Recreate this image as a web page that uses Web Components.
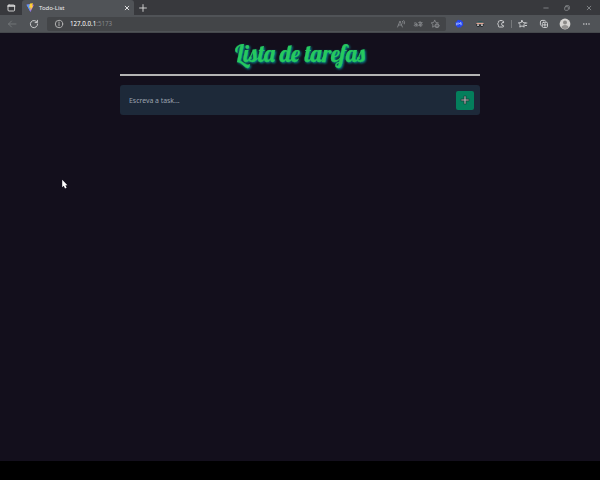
<!DOCTYPE html>
<html lang="pt-BR"><head><meta charset="utf-8"><title>Todo-List</title>
<style>html,body{margin:0;width:600px;height:480px;overflow:hidden;background:#000;font-family:"Noto Sans","Open Sans",sans-serif}</style>
</head><body><browser-window></browser-window>
<script>
const define=(name,html)=>customElements.define(name,class extends HTMLElement{
  constructor(){super();this.attachShadow({mode:'open'}).innerHTML=html;}
});
const glyphs={
 panel:'<rect x="5" y="5" width="6.6" height="6" rx="1"/><path d="M5 6h6.6" stroke-width="1.5"/>',
 vite:'<path d="M4.5 4.8 8 4.2l4 .6L8.5 12z" fill="#a65cf0" stroke="none"/><path d="M4.5 4.8 8 4.2l.5 7.8z" fill="#5a9cf0" stroke="none"/><path d="M8 3.6 11 3.2 10.2 5.8h1.1L8.4 10.8 8.5 7.6 7 7.8z" fill="#ffce35" stroke="none"/>',
 close:'<path d="m6.2 6.2 3.6 3.6m0-3.6L6.2 9.8"/>',
 plus:'<path d="M8 4.6v6.8M4.6 8h6.8"/>',
 min:'<path d="M5.8 8h4.4"/>',
 restore:'<rect x="5.7" y="6.7" width="3.6" height="3.6" rx=".7"/><path d="M7 5.7h2.5q.8 0 .8.8V9"/>',
 back:'<path d="M12 8H4.5m3-3-3 3 3 3"/>',
 reload:'<path d="M11 6.1A3.6 3.6 0 1 0 11.6 8M11.4 4.3v2.3H9.1"/>',
 info:'<circle cx="8" cy="8" r="3.7"/><path d="M8 7.6v2.2M8 6v.7"/>',
 read:'<path d="m4.6 11 2.4-6 2.4 6M5.4 9h3.2M9.4 5.2q1 .8.5 2M10.8 4.5q1.5 1.5.6 3.4"/>',
 trans:'<path d="M4.4 7q2.6-.8 2.6 1v2.3M7 8.4q-3-.3-2.9 1 .3 1.5 2.9.1M8.6 6.6h3.6M10 5.5q-.3 3 .5 4.8M11.5 7.5q-1.1 2.5-2.5 2.4-1-.5.2-1.4 3-1.2 3 .2 0 1-1.2 1.6"/>',
 staradd:'<path d="m7.7 4.3 1.1 2.2 2.5.4M7.7 4.3 6.6 6.5l-2.4.4L6 8.6l-.4 2.6 1.9-1"/><circle cx="10" cy="9.7" r="2" fill="#888a8e"/><path d="M9 9.7h2M10 8.7v2" stroke="#434548" stroke-width=".6"/>',
 badge:'<path d="m7 3.8 1.5.4 1.6-.3.7 1.4 1.4.8-.3 1.6.4 1.5-1.5.9-.8 1.4-1.6-.2-1.7.4-.8-1.3-1.5-.8.3-1.6-.4-1.6 1.4-.9z" fill="#2546f2" stroke="none"/><path d="M5.8 7.2v1.7M7.1 6.8v1.5M8.4 7.5 10 6.6v2.2" stroke="#cfe0ff" stroke-width=".8"/>',
 face:'<path d="M4.6 7.4Q5 5 8 5t3.4 2.4z" fill="#2c5558" stroke="none"/><path d="M4.3 7.7h7.4v1.2q-.8 2.1-2.6 1.8L8 9.9l-1.1.8q-2 .3-2.6-1.8z" fill="#161c20" stroke="none"/><path d="M5 7.5h6" stroke="#e0a391" stroke-width="1.3"/><path d="M5.5 9.1h1.2M9.3 9.1h1.2" stroke="#eee" stroke-width="1.1"/>',
 puzzle:'<path d="M10.6 6.2V5.7q0-.8-.8-.8H9.1Q8 3.7 6.9 4.9H6.2q-.8 0-.8.8v.8Q4 7.8 5.4 9.2v1q0 .8.8.8h3.6q.8 0 .8-.8v-.5Q8.6 9.9 8.6 8q0-1.9 2-1.8z" stroke-width=".9"/>',
 fav:'<path d="m7 4.4 1.1 2.2 2.5.3-1.8 1.7.4 2.5L7 9.9l-2.2 1.2.4-2.5-1.8-1.7 2.5-.3zM10.6 7h1.3M10 9.5h1.6"/>',
 coll:'<rect x="6.3" y="6.3" width="5.2" height="5.2" rx="1.2"/><path d="M5.2 9.7Q4.4 9.4 4.4 8.4V6q0-1.6 1.6-1.6h2.4q1 0 1.3.8M8.9 7.5v2.8M7.5 8.9h2.8"/>',
 avatar:'<circle cx="8" cy="8" r="5.4" fill="#d5d3d1" stroke="none"/><circle cx="8" cy="6.5" r="2" fill="#8b8987" stroke="none"/><path d="M4.4 11.4q.4-2.5 3.6-2.5t3.6 2.5Q8 14.5 4.4 11.4z" fill="#939190" stroke="none"/>',
 dots:'<g fill="currentColor" stroke="none"><circle cx="5.8" cy="8" r=".75"/><circle cx="8.4" cy="8" r=".75"/><circle cx="11" cy="8" r=".75"/></g>'
};
customElements.define('ui-icon',class extends HTMLElement{
 constructor(){super();this.attachShadow({mode:'open'})}
 connectedCallback(){this.shadowRoot.innerHTML=`<style>:host{display:block;width:16px;height:16px;flex:none}svg{display:block}</style><svg width="16" height="16" viewBox="0 0 16 16" fill="none" stroke="currentColor" stroke-width=".9" stroke-linecap="round" stroke-linejoin="round">${glyphs[this.getAttribute('name')]}</svg>`}
});
define('browser-tab',`<style>:host{display:flex;align-items:center;box-sizing:border-box;width:112px;height:16px;background:#505357;border-radius:3px 3px 0 0;color:#eee;font-size:6px}span{flex:1;white-space:nowrap;line-height:14px;margin-left:1px}.x{margin-right:-1px}ui-icon{margin-top:-1px}</style><ui-icon name="vite"></ui-icon><span><slot></slot></span><ui-icon class="x" name="close"></ui-icon>`);
define('tab-strip',`<style>:host{display:flex;height:15px;background:#38393d;color:#ddd}.panel{margin:0 3px 0 3px}browser-tab{flex:none}.new{margin-left:.5px}.min{margin-left:387px;color:#85878a}.win{margin-left:5.5px;color:#85878a}ui-icon{margin-top:-.5px}</style>
<ui-icon class="panel" name="panel"></ui-icon><browser-tab>Todo-List</browser-tab><ui-icon class="new" name="plus"></ui-icon><ui-icon class="min" name="min"></ui-icon><ui-icon class="win" name="restore"></ui-icon><ui-icon class="win" name="close"></ui-icon>`);
define('address-bar',`<style>:host{display:flex;align-items:center;box-sizing:border-box;width:399px;height:14px;padding:0 3px 0 4px;background:#434548;border-radius:2px;color:#85878a;font-size:6.2px}.info{color:#bbb}.url{flex:1;margin-left:3px;line-height:14px}b{font-weight:400;color:#fff}.act{margin-left:1px}</style><ui-icon class="info" name="info"></ui-icon><span class="url"><b>127.0.0.1</b>:5173</span><ui-icon name="read"></ui-icon><ui-icon class="act" name="trans"></ui-icon><ui-icon class="act" name="staradd"></ui-icon>`);
define('tool-bar',`<style>:host{display:flex;align-items:center;box-sizing:border-box;height:18px;padding-left:4px;background:#505357;border-bottom:1px solid #45484c;color:#d6d7d9}address-bar{margin-left:5px;flex:none}.back{color:#75787b}.re{margin-left:6px}i{width:1px;height:8px;margin:0 2px 0 2px;background:#77797c}.g5{margin-left:5px}</style>
<ui-icon class="back" name="back"></ui-icon><ui-icon class="re" name="reload"></ui-icon><address-bar></address-bar><ui-icon class="g5" name="badge"></ui-icon><ui-icon class="g5" name="face"></ui-icon><ui-icon class="g5" name="puzzle"></ui-icon><i></i><ui-icon style="margin-left:1px" name="fav"></ui-icon><ui-icon class="g5" name="coll"></ui-icon><ui-icon class="g5" name="avatar"></ui-icon><ui-icon class="g5" name="dots"></ui-icon>`);
define('page-title',`<style>:host{display:block;height:41px;border-bottom:2px solid #b4b4b4;box-sizing:border-box}svg{display:block;margin:auto;overflow:visible;filter:drop-shadow(1px 1.2px 1px #079098)}text{font:400 24px Lobster,"Liberation Serif",serif;fill:#26c95f;stroke:#26c95f;stroke-width:.25px}</style>
<svg width="132" height="39" role="heading"><text x="1" y="27" textLength="130" lengthAdjust="spacingAndGlyphs">Lista de tarefas</text></svg>`);
define('add-button',`<style>:host{display:block;flex:none}button{display:grid;place-items:center;width:18px;height:19px;padding:0;border:0;border-radius:2px;background:#047f5c}svg{display:block}</style><button aria-label="Adicionar"><svg width="10" height="10" viewBox="0 0 10 10" fill="none"><path d="M5 .8v8.4M.8 5h8.4" stroke="#17352e" stroke-width="2.6"/><path d="M5 1.3v7.4M1.3 5h7.4" stroke="#b8b0b6" stroke-width="1.2"/></svg></button>`);
define('task-form',`<style>:host{display:flex;align-items:center;box-sizing:border-box;height:30px;margin-top:9px;padding:0 6px 0 9px;background:#1d2939;border-radius:3px;color:#9aa2ae;font-size:6.9px}span{flex:1;line-height:12px;padding-top:1px}</style><span><slot></slot></span><add-button></add-button>`);
define('todo-page',`<style>:host{display:block;position:relative;height:428px;background:#130f1c;overflow:hidden}main{width:360px;margin:2px auto 0}.cursor{position:absolute;left:61px;top:146px}</style><main><page-title></page-title><task-form>Escreva a task...</task-form></main><svg class="cursor" width="8" height="10" viewBox="0 0 8 10"><path d="M1.2.8v7.4L2.8 6.8 4 9.4l1.6-.7-1.2-2.5h2z" fill="#fff"/></svg>`);
define('browser-window',`<style>:host{display:block;width:600px;height:480px;background:#000}</style><tab-strip></tab-strip><tool-bar></tool-bar><todo-page></todo-page>`);
</script></body></html>
